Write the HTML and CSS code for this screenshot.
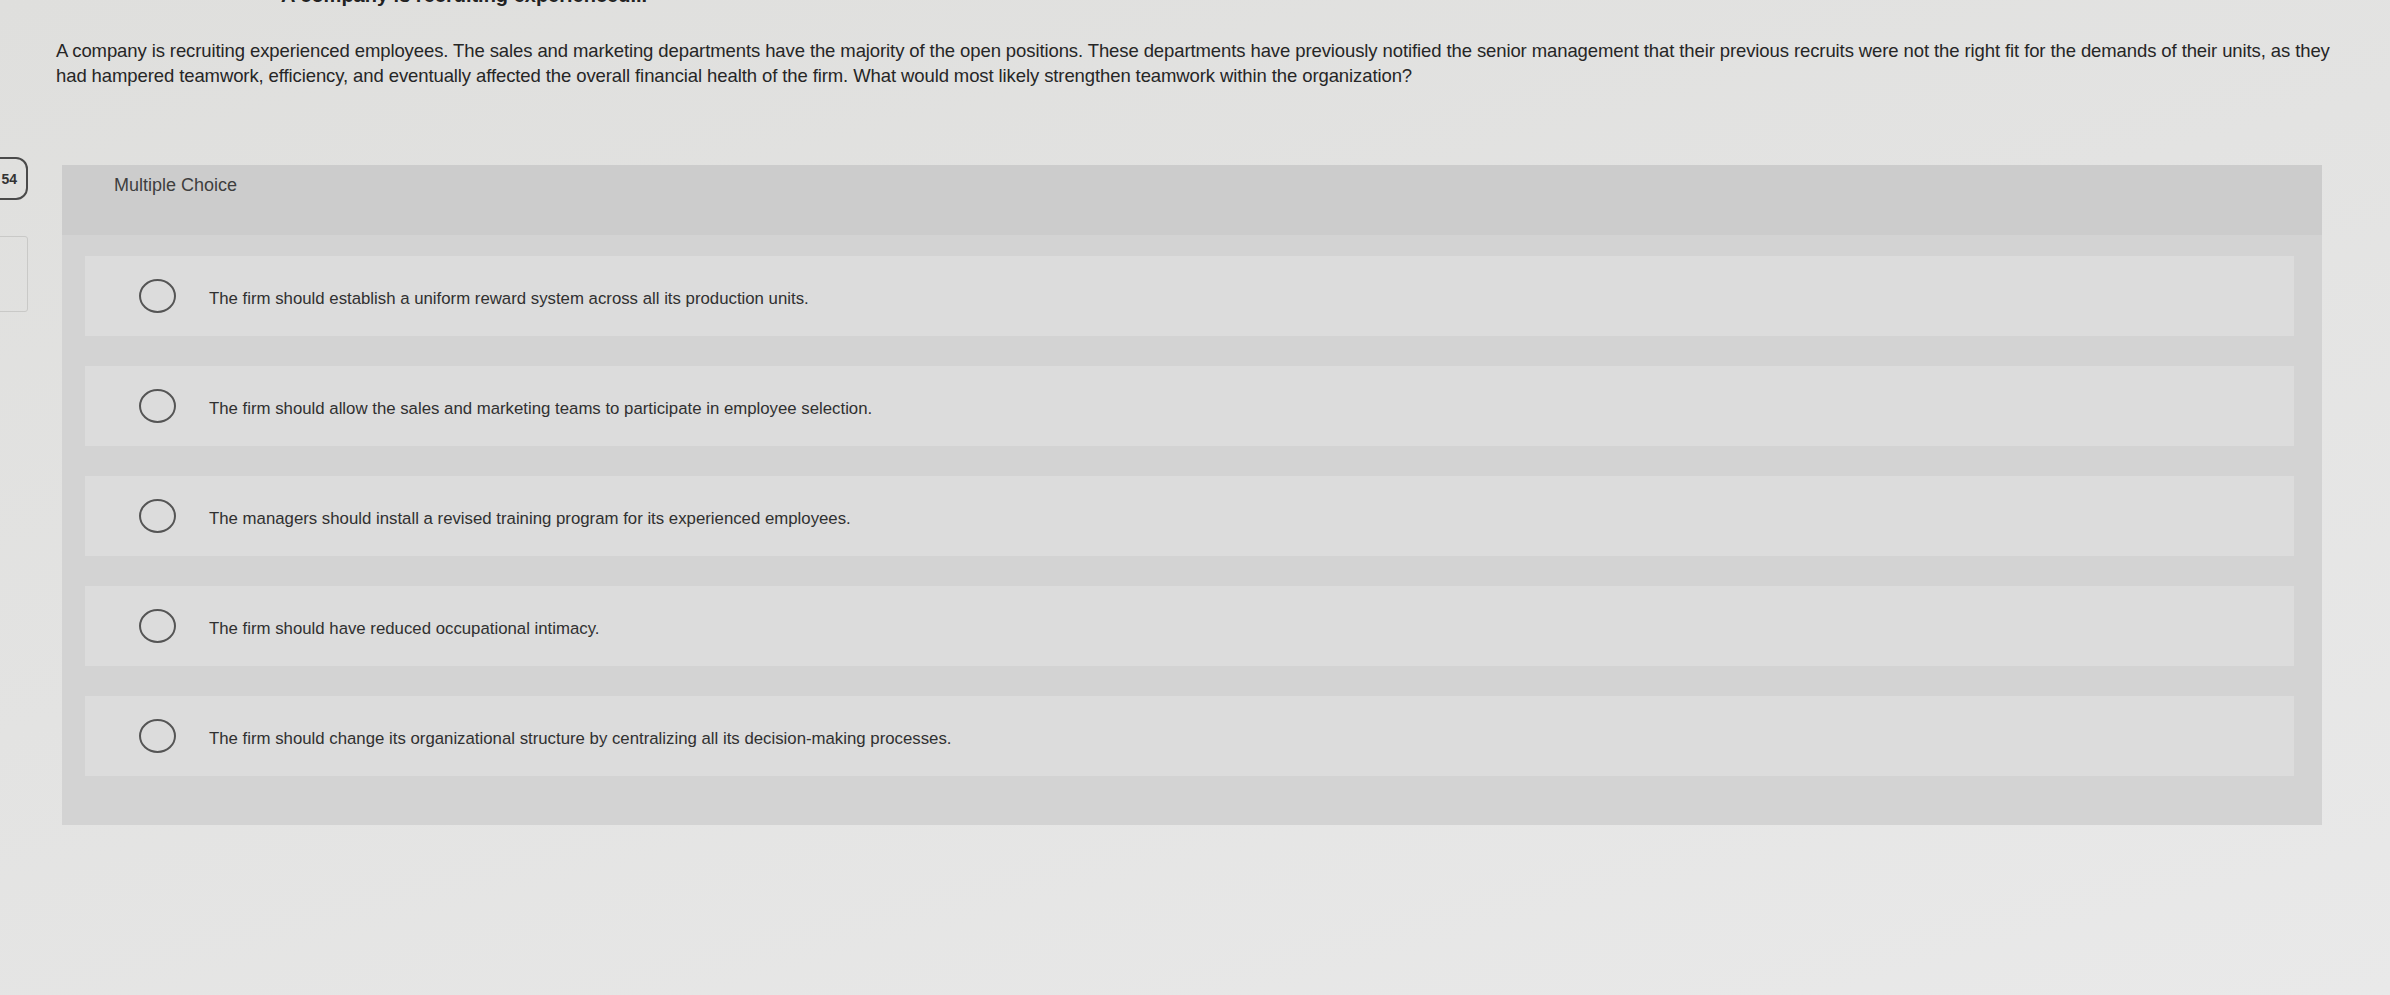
FILE: index.html
```html
<!DOCTYPE html>
<html lang="en">
<head>
<meta charset="utf-8">
<title>Multiple Choice</title>
<link rel="stylesheet" href="styles.css">
</head>
<body>
<header class="crumb">A company is recruiting experienced...</header>
<p class="question">A company is recruiting experienced employees. The sales and marketing departments have the majority of the open positions. These departments have previously notified the senior management that their previous recruits were not the right fit for the demands of their units, as they had hampered teamwork, efficiency, and eventually affected the overall financial health of the firm. What would most likely strengthen teamwork within the organization?</p>
<div class="main">
  <aside class="gutter">
    <div class="qnum">54</div>
    <div class="slot"></div>
  </aside>
  <section class="panel">
    <div class="panel-head">Multiple Choice</div>
    <ul class="options">
      <li class="option"><span class="radio"></span><span class="label">The firm should establish a uniform reward system across all its production units.</span></li>
      <li class="option"><span class="radio"></span><span class="label">The firm should allow the sales and marketing teams to participate in employee selection.</span></li>
      <li class="option"><span class="radio"></span><span class="label">The managers should install a revised training program for its experienced employees.</span></li>
      <li class="option"><span class="radio"></span><span class="label">The firm should have reduced occupational intimacy.</span></li>
      <li class="option"><span class="radio"></span><span class="label">The firm should change its organizational structure by centralizing all its decision-making processes.</span></li>
    </ul>
  </section>
</div>
</body>
</html>
```

FILE: styles.css
```css
html, body {
  margin: 0;
  padding: 0;
}
body {
  background: linear-gradient(165deg, #dfdfdd 0%, #e3e3e2 45%, #e9e9e9 100%);
  font-family: "Liberation Sans", Arial, sans-serif;
  color: #2e2e2e;
  overflow: hidden;
  height: 995px;
}
.crumb {
  margin: -15px 0 0 281px;
  font-size: 20px;
  line-height: 20px;
  font-weight: bold;
  color: #222;
}
.question {
  margin: 33px 44px 0 56px;
  font-size: 18.5px;
  line-height: 25px;
  letter-spacing: -0.1px;
  color: #262626;
}
.main {
  display: flex;
  align-items: flex-start;
  margin-top: 69px;
}
.gutter {
  width: 53px;
  margin-left: -25px;
  display: flex;
  flex-direction: column;
  align-items: flex-end;
  gap: 36px;
}
.qnum {
  box-sizing: border-box;
  width: 50px;
  height: 43px;
  border: 2px solid #4a4a4a;
  border-radius: 12px;
  display: flex;
  align-items: center;
  justify-content: flex-end;
  padding-right: 9px;
  font-size: 14px;
  font-weight: bold;
  color: #333;
}
.slot {
  box-sizing: border-box;
  width: 38px;
  height: 76px;
  border: 1px solid #c9c9c7;
  border-radius: 3px;
  align-self: flex-end;
}
.panel {
  flex: 1;
  margin: 8px 68px 0 34px;
  background: #d3d3d3;
}
.panel-head {
  box-sizing: border-box;
  height: 70px;
  padding: 9px 0 0 52px;
  background: #cccccc;
  font-size: 18px;
  line-height: 22px;
  color: #3e3e3e;
}
.options {
  list-style: none;
  margin: 0;
  padding: 21px 28px 49px 23px;
  display: flex;
  flex-direction: column;
  gap: 30px;
}
.option {
  height: 80px;
  background: #dcdcdc;
  display: flex;
  align-items: center;
  padding-left: 54px;
}
.radio {
  box-sizing: border-box;
  width: 37px;
  height: 34px;
  border: 2.5px solid #555;
  border-radius: 50%;
  flex: none;
}
.label {
  margin-left: 33px;
  margin-top: 5px;
  font-size: 16.8px;
  color: #303030;
}
```
